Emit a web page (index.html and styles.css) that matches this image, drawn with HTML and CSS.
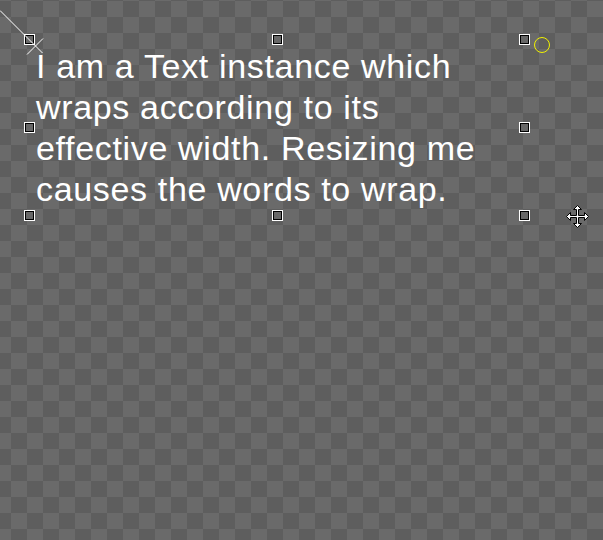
FILE: index.html
```html
<!DOCTYPE html>
<html>
<head>
<meta charset="utf-8">
<link rel="stylesheet" href="styles.css">
</head>
<body>
<div class="stage">
  <div class="item">
    <p class="label">I am a Text instance which wraps according to its effective width. Resizing me causes the words to wrap.</p>
    <span class="handle h-tl"></span>
    <span class="handle h-tc"></span>
    <span class="handle h-tr"></span>
    <span class="handle h-ml"></span>
    <span class="handle h-mr"></span>
    <span class="handle h-bl"></span>
    <span class="handle h-bc"></span>
    <span class="handle h-br"></span>
  </div>
  <svg class="overlay" width="603" height="540" viewBox="0 0 603 540">
    <g stroke="#ffffff" stroke-width="1" fill="none">
      <line x1="0" y1="10.5" x2="42.5" y2="53"/>
      <line x1="27" y1="54.5" x2="43" y2="38.5"/>
    </g>
    <circle cx="542" cy="45" r="7.5" fill="none" stroke="#f2f200" stroke-width="1"/>
    <g transform="translate(577.5 216.5)">
      <polygon points="0,-11 4,-7 1,-7 1,-1 7,-1 7,-4 11,0 7,4 7,1 1,1 1,7 4,7 0,11 -4,7 -1,7 -1,1 -7,1 -7,4 -11,0 -7,-4 -7,-1 -1,-1 -1,-7 -4,-7" fill="#ffffff" stroke="#000000" stroke-width="1" stroke-linejoin="miter"/>
    </g>
  </svg>
</div>
</body>
</html>
```
FILE: styles.css
```css
html, body {
  margin: 0;
  padding: 0;
}
body {
  width: 603px;
  height: 540px;
  overflow: hidden;
}
.stage {
  position: relative;
  width: 603px;
  height: 540px;
  background: repeating-conic-gradient(#5e5e5e 0 25%, #6a6a6a 0 50%) 11px 1px / 32px 32px;
  overflow: hidden;
}
.item {
  position: absolute;
  left: 29px;
  top: 39px;
  width: 495px;
  height: 176px;
  box-sizing: border-box;
  padding: 7px 0 0 7px;
}
.label {
  margin: 0;
  width: 462px;
  color: #ffffff;
  font-family: "Liberation Sans", Arial, sans-serif;
  font-size: 34px;
  line-height: 41px;
  letter-spacing: 0.66px;
}
.handle {
  position: absolute;
  width: 9px;
  height: 9px;
  margin: -4px 0 0 -4px;
  box-sizing: border-box;
  border: 1px solid #000000;
  box-shadow: 0 0 0 1px #ffffff;
  background: #676767;
}
.h-tl { left: 0; top: 0; }
.h-tc { left: 248px; top: 0; }
.h-tr { left: 495px; top: 0; }
.h-ml { left: 0; top: 88px; }
.h-mr { left: 495px; top: 88px; }
.h-bl { left: 0; top: 176px; }
.h-bc { left: 248px; top: 176px; }
.h-br { left: 495px; top: 176px; }
.overlay {
  position: absolute;
  left: 0;
  top: 0;
  pointer-events: none;
}
```
